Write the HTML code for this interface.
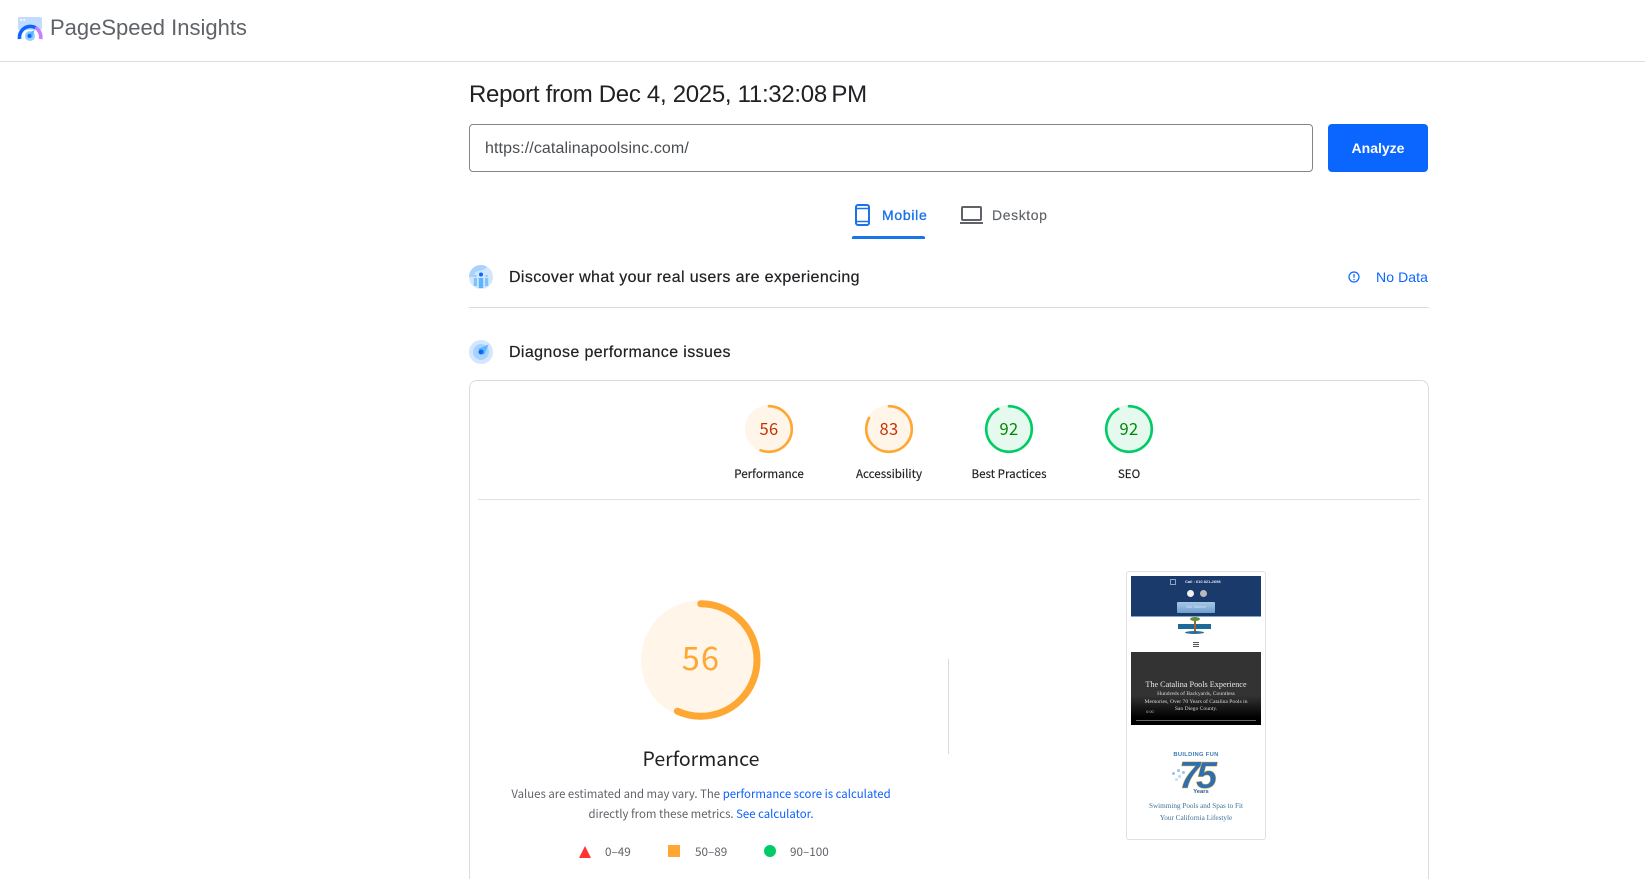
<!DOCTYPE html>
<html lang="en"><head><meta charset="utf-8"><title>PageSpeed Insights</title>
<style>
html,body{margin:0;padding:0;background:#fff;width:1645px;height:879px;overflow:hidden}
body{position:relative;font-family:"Liberation Sans",sans-serif}
.a{position:absolute;white-space:nowrap}
.seg{font-family:"Noto Sans CJK JP","Liberation Sans",sans-serif}
svg{position:absolute;overflow:visible}
.lbl{width:120px;text-align:center;top:465px;height:18px;line-height:18px;font-size:11.6px;color:#212121;-webkit-text-stroke:.15px #212121}
.num{width:48px;text-align:center;top:416px;height:24px;line-height:24px;font-size:16.5px;letter-spacing:.3px}
a{color:#0b5fff;text-decoration:none}
.shot .a{font-family:"Liberation Serif",serif}
.shot{filter:blur(.3px)}
.h2{font-size:16px;color:#202124;letter-spacing:.38px;-webkit-text-stroke:.2px #202124}
</style></head><body>

<svg style="left:18px;top:17px" width="25" height="24" viewBox="0 0 25 24">
<rect x="0" y="0" width="24" height="13" rx="2" fill="#c2dcff"/>
<circle cx="3" cy="3" r="1" fill="#fff"/><circle cx="6.2" cy="3" r="1" fill="#fff"/>
<path d="M1.6 22A11 11 0 0 1 17.5 10.6" fill="none" stroke="#0b66ff" stroke-width="3.6"/>
<path d="M17.5 10.6A11 11 0 0 1 22.6 22" fill="none" stroke="#c77dff" stroke-width="3.6"/>
<circle cx="12" cy="19" r="5" fill="#8fd0ff"/>
<path d="M9 17L16.5 13L14 21Z" fill="#5ab4ff"/>
<circle cx="11.5" cy="19" r="2" fill="#0b66ff"/>
</svg>
<div class="a" style="left:50px;top:14px;height:28px;line-height:28px;font-size:22px;color:#5f6368">PageSpeed Insights</div>
<div class="a" style="left:0;top:61px;width:1645px;height:1px;background:#dadce0"></div>

<div class="a" style="left:469px;top:79px;height:32px;line-height:32px;font-size:24px;color:#202124;letter-spacing:-.3px">Report from Dec 4, 2025, 11:32:08&#8201;PM</div>

<div class="a" style="left:469px;top:124px;width:842px;height:46px;border:1px solid #80868b;border-radius:4px"></div>
<div class="a" style="left:485px;top:137.5px;height:21px;line-height:21px;font-size:16px;color:#4a4d51;letter-spacing:.1px">https://catalinapoolsinc.com/</div>
<div class="a" style="left:1328px;top:124px;width:100px;height:48px;background:#0b66ff;border-radius:4px;color:#fff;font-size:14px;font-weight:bold;text-align:center;line-height:49px">Analyze</div>

<svg style="left:855px;top:204px" width="15" height="22" viewBox="0 0 15 22"><rect x="1" y="1" width="13" height="20" rx="2" fill="none" stroke="#1a73e8" stroke-width="2"/><path d="M1 4.5H14M1 17.5H14" stroke="#1a73e8" stroke-width="1.6"/></svg>
<div class="a" style="left:882px;top:206px;height:18px;line-height:18px;font-size:14px;color:#1a73e8;letter-spacing:.7px;-webkit-text-stroke:.35px #1a73e8">Mobile</div>
<div class="a" style="left:852px;top:236px;width:73px;height:3px;background:#1a73e8;border-radius:2px 2px 0 0"></div>
<svg style="left:960px;top:206px" width="23" height="19" viewBox="0 0 23 19"><rect x="2" y="1" width="19" height="13" rx="1" fill="none" stroke="#5f6368" stroke-width="2"/><rect x="0" y="16" width="23" height="2" fill="#5f6368"/></svg>
<div class="a" style="left:992px;top:206px;height:18px;line-height:18px;font-size:14px;color:#5f6368;letter-spacing:.6px;-webkit-text-stroke:.15px #5f6368">Desktop</div>

<svg style="left:469px;top:265px" width="24" height="24" viewBox="0 0 24 24">
<circle cx="12" cy="12" r="12" fill="#d2e7ff"/><path d="M0 12A12 12 0 0 1 12 0Q15 0 18 2Q14 6 9 6Q5 7 5 12Z" fill="#a8d2fb"/>
<circle cx="12" cy="9.5" r="2" fill="#0b66ff"/><rect x="9.8" y="13" width="4.4" height="10" fill="#5ab4ff"/><rect x="4.8" y="13" width="3.2" height="8" fill="#7cc4ff"/><rect x="16" y="13" width="3.2" height="8" fill="#7cc4ff"/><circle cx="6.4" cy="11" r="1.1" fill="#7cc4ff"/><circle cx="17.6" cy="11" r="1.1" fill="#7cc4ff"/>
</svg>
<div class="a h2" style="left:509px;top:267px;height:22px;line-height:22px">Discover what your real users are experiencing</div>
<svg style="left:1348px;top:271px" width="12" height="12" viewBox="0 0 12 12"><circle cx="6" cy="6" r="5" fill="none" stroke="#0b66ff" stroke-width="1.2"/><path d="M6 3V6.8M6 8V9.2" stroke="#0b66ff" stroke-width="1.2"/></svg>
<div class="a" style="left:1376px;top:268px;height:18px;line-height:18px;font-size:14px;color:#0b66ff;letter-spacing:.1px">No Data</div>
<div class="a" style="left:469px;top:307px;width:960px;height:1px;background:#dadce0"></div>

<svg style="left:469px;top:340px" width="24" height="24" viewBox="0 0 24 24">
<circle cx="12" cy="12" r="12" fill="#d2e7ff"/><circle cx="12" cy="12" r="8" fill="#a8d2fb"/><path d="M9 9L19.5 4.5L15 15Z" fill="#5ab4ff"/><circle cx="12" cy="12" r="2.5" fill="#0b66ff"/>
</svg>
<div class="a h2" style="left:509px;top:342px;height:22px;line-height:22px">Diagnose performance issues</div>

<div class="a" style="left:469px;top:380px;width:958px;height:520px;border:1px solid #dadce0;border-radius:8px"></div>

<svg style="left:745px;top:405px" width="48" height="48" viewBox="0 0 48 48"><circle cx="24" cy="24" r="24" fill="#fff5e9"/><circle cx="24" cy="24" r="22.8" fill="none" stroke="#ffa733" stroke-width="2.6" stroke-linecap="round" stroke-dasharray="80.2 200" transform="rotate(-90 24 24)"/></svg>
<div class="a seg num" style="left:745px;color:#c33300">56</div>
<div class="a seg lbl" style="left:709px">Performance</div>

<svg style="left:865px;top:405px" width="48" height="48" viewBox="0 0 48 48"><circle cx="24" cy="24" r="24" fill="#fff5e9"/><circle cx="24" cy="24" r="22.8" fill="none" stroke="#ffa733" stroke-width="2.6" stroke-linecap="round" stroke-dasharray="118.9 200" transform="rotate(-90 24 24)"/></svg>
<div class="a seg num" style="left:865px;color:#c33300">83</div>
<div class="a seg lbl" style="left:829px">Accessibility</div>

<svg style="left:985px;top:405px" width="48" height="48" viewBox="0 0 48 48"><circle cx="24" cy="24" r="24" fill="#e6f9ee"/><circle cx="24" cy="24" r="22.8" fill="none" stroke="#00cc66" stroke-width="2.6" stroke-linecap="round" stroke-dasharray="131.8 200" transform="rotate(-90 24 24)"/></svg>
<div class="a seg num" style="left:985px;color:#008800">92</div>
<div class="a seg lbl" style="left:949px">Best Practices</div>

<svg style="left:1105px;top:405px" width="48" height="48" viewBox="0 0 48 48"><circle cx="24" cy="24" r="24" fill="#e6f9ee"/><circle cx="24" cy="24" r="22.8" fill="none" stroke="#00cc66" stroke-width="2.6" stroke-linecap="round" stroke-dasharray="131.8 200" transform="rotate(-90 24 24)"/></svg>
<div class="a seg num" style="left:1105px;color:#008800">92</div>
<div class="a seg lbl" style="left:1069px">SEO</div>

<div class="a" style="left:478px;top:499px;width:942px;height:1px;background:#e0e0e0"></div>

<svg style="left:641px;top:600px" width="119.5" height="120" viewBox="0 0 120 120"><circle cx="60" cy="60" r="60" fill="#fff5e9"/><circle cx="60" cy="60" r="56.5" fill="none" stroke="#ffa733" stroke-width="7" stroke-linecap="round" stroke-dasharray="201.5 400" transform="rotate(-90 60 60)"/></svg>
<div class="a seg" style="left:641px;top:635px;width:120px;height:44px;line-height:44px;text-align:center;font-size:32.5px;color:#ffa733;letter-spacing:1.2px">56</div>
<div class="a seg" style="left:601px;top:743px;width:200px;height:30px;line-height:30px;text-align:center;font-size:19.5px;color:#212121">Performance</div>
<div class="a seg" style="left:461px;top:784px;width:480px;height:20px;line-height:20px;text-align:center;font-size:11.4px;color:#5f6368">Values are estimated and may vary. The <a>performance score is calculated</a></div>
<div class="a seg" style="left:461px;top:804px;width:480px;height:20px;line-height:20px;text-align:center;font-size:11.4px;color:#5f6368">directly from these metrics. <a>See calculator.</a></div>

<svg style="left:579px;top:846px" width="12" height="12" viewBox="0 0 12 12"><path d="M6 0L12 12H0Z" fill="#ff3333"/></svg>
<div class="a seg" style="left:605px;top:842px;height:20px;line-height:20px;font-size:11.7px;color:#5f6368">0–49</div>
<div class="a" style="left:668px;top:845px;width:12px;height:12px;background:#ffa733"></div>
<div class="a seg" style="left:695px;top:842px;height:20px;line-height:20px;font-size:11.7px;color:#5f6368">50–89</div>
<div class="a" style="left:764px;top:845px;width:12px;height:12px;background:#00cc66;border-radius:50%"></div>
<div class="a seg" style="left:790px;top:842px;height:20px;line-height:20px;font-size:11.7px;color:#5f6368">90–100</div>

<div class="a" style="left:948px;top:659px;width:1px;height:95px;background:#d9d9d9"></div>

<div class="a" style="left:1126px;top:571px;width:138px;height:267px;border:1px solid #e0e0e0;border-radius:3px"></div>
<div class="a shot" style="left:1127px;top:572px;width:138px;height:267px;overflow:hidden">
 <div class="a" style="left:4px;top:4px;width:130px;height:40px;background:#1a3a6b;border-bottom:1px solid #7ea6cf"></div>
 <div class="a" style="left:43px;top:7px;width:4px;height:4px;border:1px solid #8fa3bf"></div>
 <div class="a" style="left:58px;top:6px;font:bold 4px/7px 'Liberation Sans',sans-serif;color:#dfe5ee">Call : 610 821-2698</div>
 <div class="a" style="left:60px;top:18px;width:7px;height:7px;background:#f0f0f0;border-radius:50%"></div>
 <div class="a" style="left:73px;top:18px;width:7px;height:7px;background:#b9b9b9;border-radius:50%"></div>
 <div class="a" style="left:50px;top:30px;width:38px;height:11px;background:linear-gradient(#a6c8e6,#6f9fcf);border-radius:1px;color:#d6e7f5;font:3.8px/11px 'Liberation Sans',sans-serif;text-align:center">Get Started</div>
 <div class="a" style="left:51px;top:52px;width:33px;height:5px;background:#1d6a9a"></div>
 <div class="a" style="left:67px;top:46px;width:2px;height:14px;background:#a5612f"></div>
 <div class="a" style="left:63px;top:45px;width:10px;height:4px;background:#5f8f3d;border-radius:50%"></div>
 <div class="a" style="left:58px;top:59px;width:19px;height:3px;background:#2a6f9d;border-radius:50%"></div>
 <div class="a" style="left:66px;top:70px;width:6px;height:1px;background:#555;box-shadow:0 2px #555,0 4px #555"></div>
 <div class="a" style="left:4px;top:80px;width:130px;height:73px;background:linear-gradient(#333 0,#333 60%,#000 90%)"></div>
 <div class="a" style="left:4px;top:107px;width:130px;text-align:center;font-size:8.2px;line-height:11px;color:#e8e8e8">The Catalina Pools Experience</div>
 <div class="a" style="left:4px;top:119px;width:130px;text-align:center;font-size:5.6px;line-height:7.5px;color:#d8d8d8;white-space:normal">Hundreds of Backyards, Countless<br>Memories, Over 70 Years of Catalina Pools in<br>San Diego County.</div>
 <div class="a" style="left:19px;top:137px;font:4px/6px 'Liberation Sans',sans-serif;color:#bbb">0:00</div>
 <div class="a" style="left:9px;top:148px;width:120px;height:1px;background:#666"></div>
 <div class="a" style="left:4px;top:180px;width:130px;text-align:center;font:bold 5.8px/7px 'Liberation Sans',sans-serif;color:#3b7ab5;letter-spacing:.3px">BUILDING FUN</div>
 <div class="a" style="left:46px;top:185px;width:46px;text-align:center;font:italic bold 38px/38px 'Liberation Sans',sans-serif;color:#2f6fb0;letter-spacing:-4px;-webkit-text-stroke:.5px #d8b84a">75</div>
 <div class="a" style="left:45px;top:200px;width:3px;height:3px;background:#9cc4e4;border-radius:50%;box-shadow:5px -3px #9cc4e4,6px 3px #b8d6ec,10px -1px #9cc4e4,3px 6px #c8e0f0"></div>
 <div class="a" style="left:9px;top:217px;width:130px;text-align:center;font:bold 5.8px/7px 'Liberation Sans',sans-serif;color:#2a5a96">Years</div>
 <div class="a" style="left:4px;top:229px;width:130px;text-align:center;font-size:7.2px;line-height:11.5px;color:#3f7398;white-space:normal">Swimming Pools and Spas to Fit<br>Your California Lifestyle</div>
</div>
</body></html>
